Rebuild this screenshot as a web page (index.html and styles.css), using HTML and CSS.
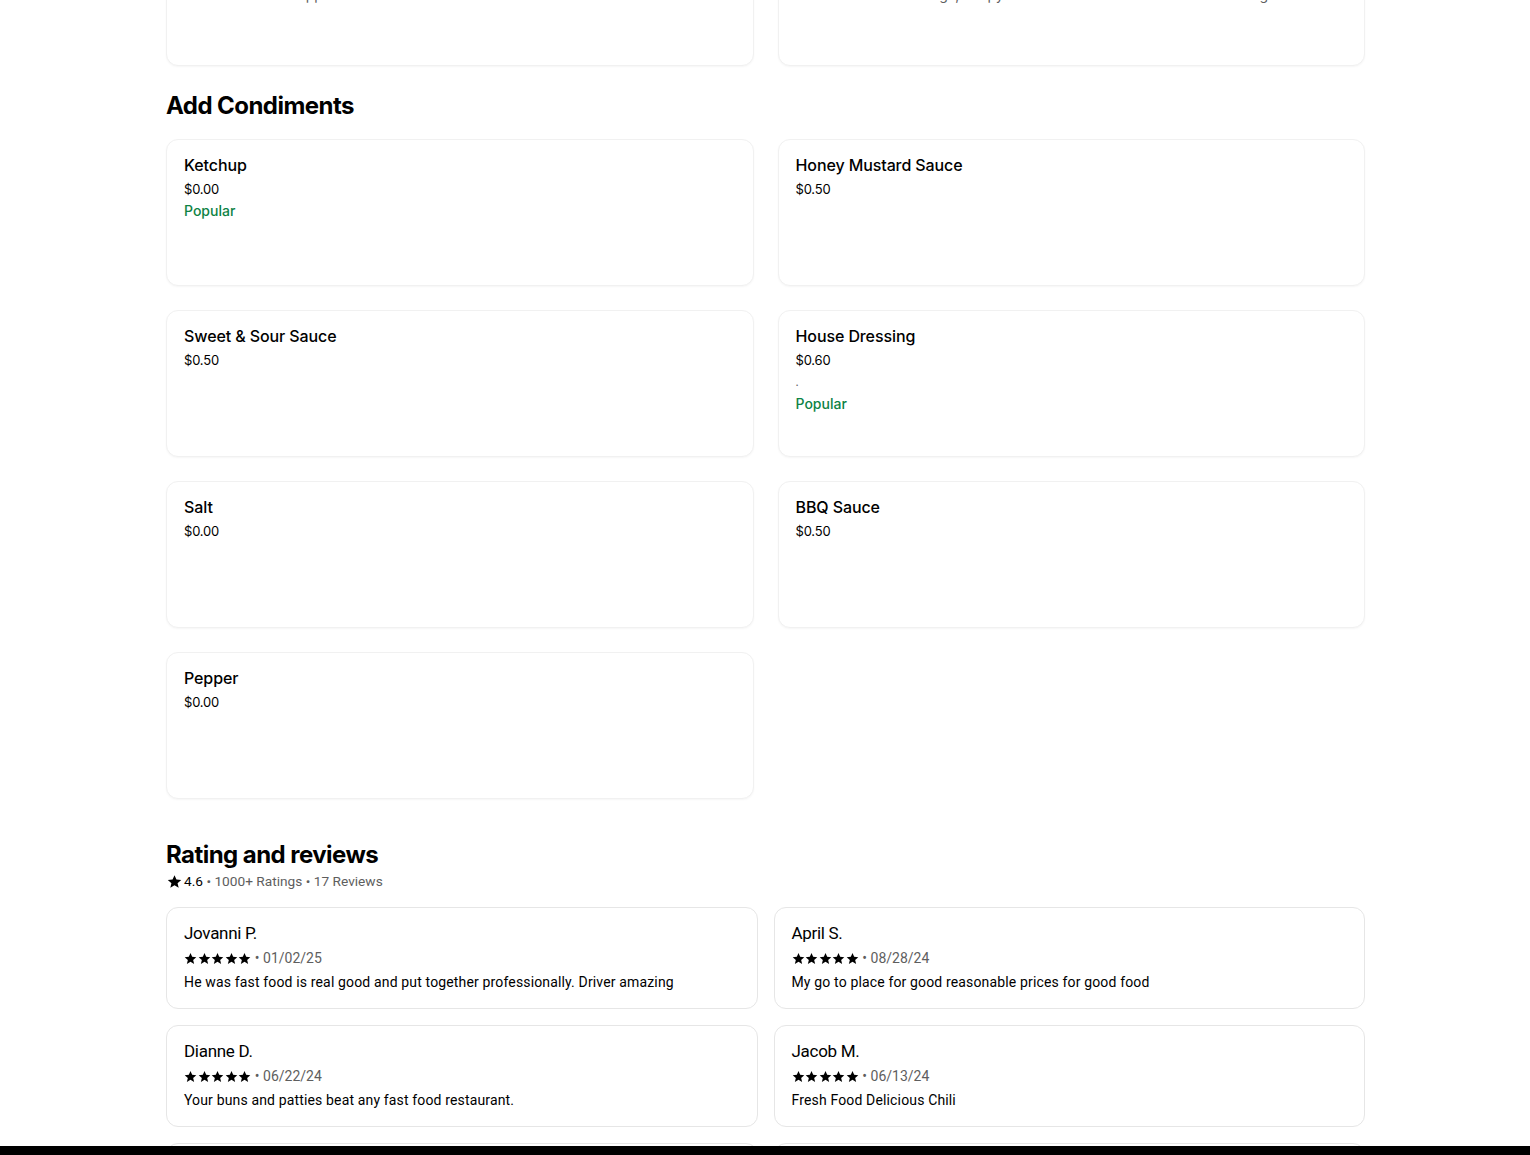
FILE: index.html
```html
<!DOCTYPE html>
<html lang="en">
<head>
<meta charset="utf-8">
<title>Menu</title>
<link rel="stylesheet" href="styles.css">
</head>
<body>
<main class="page">
  <section class="section section-prev">
    <div class="item-grid">
      <div class="item-card">
        <div class="item-name">Chili Cheese Fries</div>
        <div class="item-price">$4.29</div>
        <div class="item-desc">Crinkle cut fries topped with chili and cheese sauce</div>
      </div>
      <div class="item-card">
        <div class="item-name">Onion Rings</div>
        <div class="item-price">$3.49</div>
        <div class="item-desc">Golden fried onion rings, crispy outside and served with ranch dressing</div>
      </div>
    </div>
  </section>

  <section class="section">
    <h2 class="section-title">Add Condiments</h2>
    <div class="item-grid">
      <div class="item-card">
        <div class="item-name">Ketchup</div>
        <div class="item-price">$0.00</div>
        <div class="item-tag">Popular</div>
      </div>
      <div class="item-card">
        <div class="item-name">Honey Mustard Sauce</div>
        <div class="item-price">$0.50</div>
      </div>
      <div class="item-card">
        <div class="item-name">Sweet &amp; Sour Sauce</div>
        <div class="item-price">$0.50</div>
      </div>
      <div class="item-card">
        <div class="item-name">House Dressing</div>
        <div class="item-price">$0.60</div>
        <div class="item-dot">.</div>
        <div class="item-tag">Popular</div>
      </div>
      <div class="item-card">
        <div class="item-name">Salt</div>
        <div class="item-price">$0.00</div>
      </div>
      <div class="item-card">
        <div class="item-name">BBQ Sauce</div>
        <div class="item-price">$0.50</div>
      </div>
      <div class="item-card">
        <div class="item-name">Pepper</div>
        <div class="item-price">$0.00</div>
      </div>
    </div>
  </section>

  <section class="reviews">
    <h2 class="section-title reviews-title">Rating and reviews</h2>
    <div class="rating-summary">
      <svg class="summary-star" viewBox="0 0 24 24"><path d="M12 1.8l3.1 7.1 7.6.7-5.8 5 1.8 7.5L12 18.1l-6.7 4 1.8-7.5-5.8-5 7.6-.7z"/></svg>
      <span class="rating-value">4.6</span>
      <span class="muted">&nbsp;•&nbsp;1000+ Ratings&nbsp;•&nbsp;17 Reviews</span>
    </div>
    <div class="review-grid">
      <div class="review-card">
        <div class="review-name">Jovanni P.</div>
        <div class="review-meta">
          <span class="stars"><svg viewBox="0 0 24 24"><path d="M12 1.8l3.1 7.1 7.6.7-5.8 5 1.8 7.5L12 18.1l-6.7 4 1.8-7.5-5.8-5 7.6-.7z"/></svg><svg viewBox="0 0 24 24"><path d="M12 1.8l3.1 7.1 7.6.7-5.8 5 1.8 7.5L12 18.1l-6.7 4 1.8-7.5-5.8-5 7.6-.7z"/></svg><svg viewBox="0 0 24 24"><path d="M12 1.8l3.1 7.1 7.6.7-5.8 5 1.8 7.5L12 18.1l-6.7 4 1.8-7.5-5.8-5 7.6-.7z"/></svg><svg viewBox="0 0 24 24"><path d="M12 1.8l3.1 7.1 7.6.7-5.8 5 1.8 7.5L12 18.1l-6.7 4 1.8-7.5-5.8-5 7.6-.7z"/></svg><svg viewBox="0 0 24 24"><path d="M12 1.8l3.1 7.1 7.6.7-5.8 5 1.8 7.5L12 18.1l-6.7 4 1.8-7.5-5.8-5 7.6-.7z"/></svg></span>
          <span class="muted">&nbsp;•&nbsp;01/02/25</span>
        </div>
        <div class="review-text">He was fast food is real good and put together professionally. Driver amazing</div>
      </div>
      <div class="review-card">
        <div class="review-name">April S.</div>
        <div class="review-meta">
          <span class="stars"><svg viewBox="0 0 24 24"><path d="M12 1.8l3.1 7.1 7.6.7-5.8 5 1.8 7.5L12 18.1l-6.7 4 1.8-7.5-5.8-5 7.6-.7z"/></svg><svg viewBox="0 0 24 24"><path d="M12 1.8l3.1 7.1 7.6.7-5.8 5 1.8 7.5L12 18.1l-6.7 4 1.8-7.5-5.8-5 7.6-.7z"/></svg><svg viewBox="0 0 24 24"><path d="M12 1.8l3.1 7.1 7.6.7-5.8 5 1.8 7.5L12 18.1l-6.7 4 1.8-7.5-5.8-5 7.6-.7z"/></svg><svg viewBox="0 0 24 24"><path d="M12 1.8l3.1 7.1 7.6.7-5.8 5 1.8 7.5L12 18.1l-6.7 4 1.8-7.5-5.8-5 7.6-.7z"/></svg><svg viewBox="0 0 24 24"><path d="M12 1.8l3.1 7.1 7.6.7-5.8 5 1.8 7.5L12 18.1l-6.7 4 1.8-7.5-5.8-5 7.6-.7z"/></svg></span>
          <span class="muted">&nbsp;•&nbsp;08/28/24</span>
        </div>
        <div class="review-text">My go to place for good reasonable prices for good food</div>
      </div>
      <div class="review-card">
        <div class="review-name">Dianne D.</div>
        <div class="review-meta">
          <span class="stars"><svg viewBox="0 0 24 24"><path d="M12 1.8l3.1 7.1 7.6.7-5.8 5 1.8 7.5L12 18.1l-6.7 4 1.8-7.5-5.8-5 7.6-.7z"/></svg><svg viewBox="0 0 24 24"><path d="M12 1.8l3.1 7.1 7.6.7-5.8 5 1.8 7.5L12 18.1l-6.7 4 1.8-7.5-5.8-5 7.6-.7z"/></svg><svg viewBox="0 0 24 24"><path d="M12 1.8l3.1 7.1 7.6.7-5.8 5 1.8 7.5L12 18.1l-6.7 4 1.8-7.5-5.8-5 7.6-.7z"/></svg><svg viewBox="0 0 24 24"><path d="M12 1.8l3.1 7.1 7.6.7-5.8 5 1.8 7.5L12 18.1l-6.7 4 1.8-7.5-5.8-5 7.6-.7z"/></svg><svg viewBox="0 0 24 24"><path d="M12 1.8l3.1 7.1 7.6.7-5.8 5 1.8 7.5L12 18.1l-6.7 4 1.8-7.5-5.8-5 7.6-.7z"/></svg></span>
          <span class="muted">&nbsp;•&nbsp;06/22/24</span>
        </div>
        <div class="review-text">Your buns and patties beat any fast food restaurant.</div>
      </div>
      <div class="review-card">
        <div class="review-name">Jacob M.</div>
        <div class="review-meta">
          <span class="stars"><svg viewBox="0 0 24 24"><path d="M12 1.8l3.1 7.1 7.6.7-5.8 5 1.8 7.5L12 18.1l-6.7 4 1.8-7.5-5.8-5 7.6-.7z"/></svg><svg viewBox="0 0 24 24"><path d="M12 1.8l3.1 7.1 7.6.7-5.8 5 1.8 7.5L12 18.1l-6.7 4 1.8-7.5-5.8-5 7.6-.7z"/></svg><svg viewBox="0 0 24 24"><path d="M12 1.8l3.1 7.1 7.6.7-5.8 5 1.8 7.5L12 18.1l-6.7 4 1.8-7.5-5.8-5 7.6-.7z"/></svg><svg viewBox="0 0 24 24"><path d="M12 1.8l3.1 7.1 7.6.7-5.8 5 1.8 7.5L12 18.1l-6.7 4 1.8-7.5-5.8-5 7.6-.7z"/></svg><svg viewBox="0 0 24 24"><path d="M12 1.8l3.1 7.1 7.6.7-5.8 5 1.8 7.5L12 18.1l-6.7 4 1.8-7.5-5.8-5 7.6-.7z"/></svg></span>
          <span class="muted">&nbsp;•&nbsp;06/13/24</span>
        </div>
        <div class="review-text">Fresh Food Delicious Chili</div>
      </div>
      <div class="review-card">
        <div class="review-name">Maria L.</div>
        <div class="review-meta"><span class="muted">05/30/24</span></div>
        <div class="review-text">Great service</div>
      </div>
      <div class="review-card">
        <div class="review-name">Kevin R.</div>
        <div class="review-meta"><span class="muted">05/12/24</span></div>
        <div class="review-text">Always hot and fresh</div>
      </div>
    </div>
  </section>
</main>
<div class="bottom-bar"></div>
</body>
</html>
```

FILE: styles.css
```css
* { box-sizing: border-box; }

html, body {
  margin: 0;
  padding: 0;
  background: #ffffff;
  color: #000000;
  font-family: Inter, "Noto Sans", "Liberation Sans", sans-serif;
  overflow: hidden;
}

.page {
  width: 1200px;
  margin: -81px auto 0;
  padding-left: 1px;
}

.section { margin: 0; }

.section-title {
  margin: 0;
  font-family: Inter, "Liberation Sans", sans-serif;
  font-weight: 700;
  font-size: 24px;
  line-height: 32px;
  letter-spacing: -0.55px;
  color: #000;
}

.section-prev { margin-bottom: 24px; }
.section .section-title { margin-bottom: 17px; }

.item-grid {
  display: grid;
  grid-template-columns: 1fr 1fr;
  column-gap: 24px;
  row-gap: 24px;
}

.item-card {
  height: 147px;
  border: 1px solid #f1f1f1;
  border-radius: 12px;
  box-shadow: 0 1px 2px rgba(0, 0, 0, 0.04);
  padding: 14px 17px;
  background: #fff;
}

.item-name {
  font-size: 16px;
  line-height: 22px;
  font-weight: 500;
  color: #000;
  letter-spacing: -0.1px;
}

.item-price {
  margin-top: 2px;
  font-size: 13px;
  line-height: 22px;
  color: #000;
  letter-spacing: -0.2px;
}

.item-desc {
  margin-top: 5px;
  font-size: 14px;
  line-height: 20px;
  color: #5e5e5e;
}

.item-dot {
  font-size: 11px;
  line-height: 22px;
  color: #5e5e5e;
}

.item-tag {
  margin-top: 0;
  font-size: 14px;
  line-height: 22px;
  font-weight: 500;
  color: #0e8345;
}

.reviews { margin-top: 40px; }

.reviews-title { margin-bottom: 0; }

.rating-summary {
  display: flex;
  align-items: center;
  height: 20px;
  font-family: Roboto, "Liberation Sans", sans-serif;
  font-size: 13.7px;
  line-height: 20px;
  padding-left: 1px;
  margin-bottom: 16px;
}

.summary-star {
  width: 15px;
  height: 15px;
  margin-right: 2px;
  fill: #000;
}

.rating-value { color: #000; }

.muted { color: #5e5e5e; }

.review-grid {
  display: grid;
  grid-template-columns: 1fr 1fr;
  column-gap: 16px;
  row-gap: 16px;
}

.review-card {
  height: 102px;
  border: 1px solid #e6e6e6;
  border-radius: 12px;
  padding: 15px 17px;
  font-family: Roboto, "Liberation Sans", sans-serif;
}

.review-name {
  font-size: 17px;
  line-height: 20px;
  color: #000;
  letter-spacing: -0.3px;
}

.review-meta {
  display: flex;
  align-items: center;
  margin-top: 5px;
  height: 20px;
  font-size: 14px;
  line-height: 20px;
}

.stars {
  display: flex;
  align-items: center;
  gap: 0.6px;
}

.stars svg {
  width: 13px;
  height: 13px;
  fill: #000;
}

.review-text {
  margin-top: 4px;
  font-size: 14px;
  line-height: 20px;
  letter-spacing: 0.15px;
  color: #000;
}

.bottom-bar {
  position: fixed;
  left: 0;
  right: 0;
  bottom: 0;
  height: 9px;
  background: #000;
}
```
